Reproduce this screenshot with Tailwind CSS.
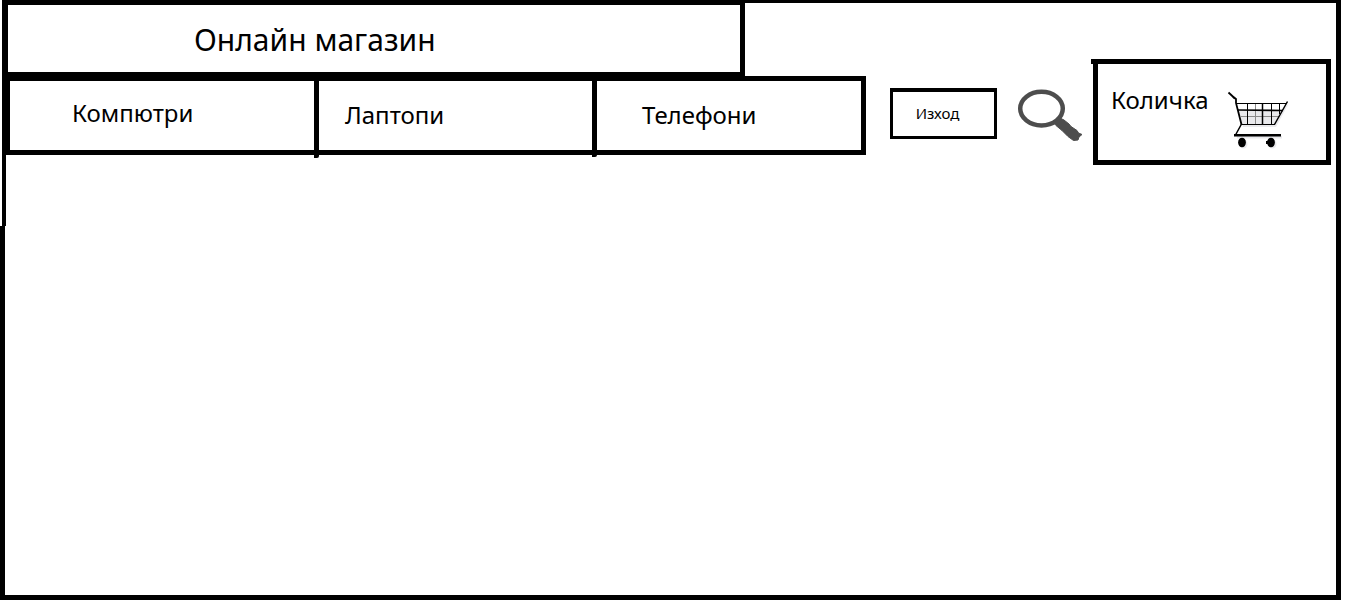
<!DOCTYPE html>
<html lang="bg">
<head>
<meta charset="utf-8">
<meta name="viewport" content="width=device-width, initial-scale=1">
<title>Онлайн магазин</title>
<script src="https://cdn.jsdelivr.net/npm/@tailwindcss/browser@4"></script>
</head>
<body class="flex min-h-screen flex-col bg-white pr-[19px] font-['Noto_Sans','Open_Sans',sans-serif] text-black">
<header class="ml-[2px] flex min-h-[226px] items-start border-t-3 border-r-5 border-l-4 border-black">
  <div class="min-w-0 flex-1">
    <div class="mr-[121px] flex h-[73px] items-center border-t-2 border-r-5 border-b-4 border-l-2 border-black pt-[2px] pl-[186px]">
      <h1 class="text-[30px] leading-10 whitespace-nowrap">Онлайн магазин</h1>
    </div>
    <nav aria-label="Категории" class="grid h-[79px] grid-cols-[309fr_278fr_264fr] border-5 border-l-4 border-black text-[24px] leading-8">
      <a href="#computers" class="-mb-[8px] rounded-br-xs border-r-5 border-black pt-4 pl-[62px]">Компютри</a>
      <a href="#laptops" class="-mb-[7px] rounded-br-xs border-r-5 border-black pt-[18px] pl-[26px]">Лаптопи</a>
      <a href="#phones" class="pt-[18px] pl-[45px]">Телефони</a>
    </nav>
  </div>
  <button type="button" class="mt-[85px] ml-6 h-[51px] w-[107px] border-3 border-t-4 border-black pr-3 pb-[2px] text-[15px] leading-6">Изход</button>
  <button type="button" aria-label="Търсене" class="mt-[85px] ml-5">
    <svg class="block h-[56px] w-[68px]" viewBox="0 0 68 56" fill="none" stroke="#4d4d4d" aria-hidden="true">
      <ellipse cx="24.500" cy="20.600" rx="21.300" ry="16.900" stroke-width="4.500"/>
      <path d="M36 34L44 30.500L47 32L52 36L54 38.500L60 42.500L61.500 45L65 46.500L62 49L61 52L56.500 52.500L51 48.500L45 42.500L39 37.500Z" fill="#4d4d4d" stroke-width="1"/>
    </svg>
  </button>
  <a href="#cart" class="mt-[56px] mr-[5px] ml-[6px] flex h-[106px] w-[240px] items-start">
    <span class="h-[5px] w-[2px] bg-black"></span>
    <span class="flex h-full flex-1 border-5 border-black pt-[20px] pl-[13px] text-[24px] leading-8">
      <span class="w-[114px]">Количка</span>
      <svg class="mt-[6px] block h-[62px] w-[66px] shrink-0" viewBox="0 0 66 62" fill="none" stroke="#000" aria-hidden="true">
        <g fill="#e9e9ec" stroke="none">
          <path d="M13 21L57 21L64 13L51 37H18Z"/>
          <path d="M12 46H57V48.500H12Z"/>
          <ellipse cx="18.500" cy="54" rx="4" ry="4.500"/>
          <ellipse cx="47.500" cy="54" rx="4" ry="4.500"/>
        </g>
        <path d="M13 14H60L57 19H14Z" fill="#fff" stroke="none"/>
        <path d="M16 26.500H54M30.500 13V34" stroke="#8a8a8a"/>
        <path d="M22.500 13V34M46.500 13V34M54.500 13V24"/>
        <path d="M37.500 13V34" stroke-width="1.500"/>
        <path d="M11 13.500H62M16 34.500H50"/>
        <path d="M13 20L58 20.500" stroke-width="1.700"/>
        <path d="M3.500 2.500L10 8.500" stroke-width="1.800"/>
        <path d="M8 7L11 9V13L16.500 34.500" stroke-width="1.800"/>
        <path d="M62.500 11.500L49.500 34.500M16.500 34L10.500 45" stroke-width="1.500"/>
        <path d="M9 45.300H56" stroke-width="2.400"/>
        <path d="M41 52.500H44" stroke-width="3"/>
        <ellipse cx="17" cy="52.500" rx="3.900" ry="4.800" fill="#000" stroke="none"/>
        <ellipse cx="46" cy="52.500" rx="3.900" ry="4.800" fill="#000" stroke="none"/>
      </svg>
    </span>
  </a>
</header>
<main class="flex-1 border-r-5 border-b-5 border-l-5 border-black"></main>
</body>
</html>
